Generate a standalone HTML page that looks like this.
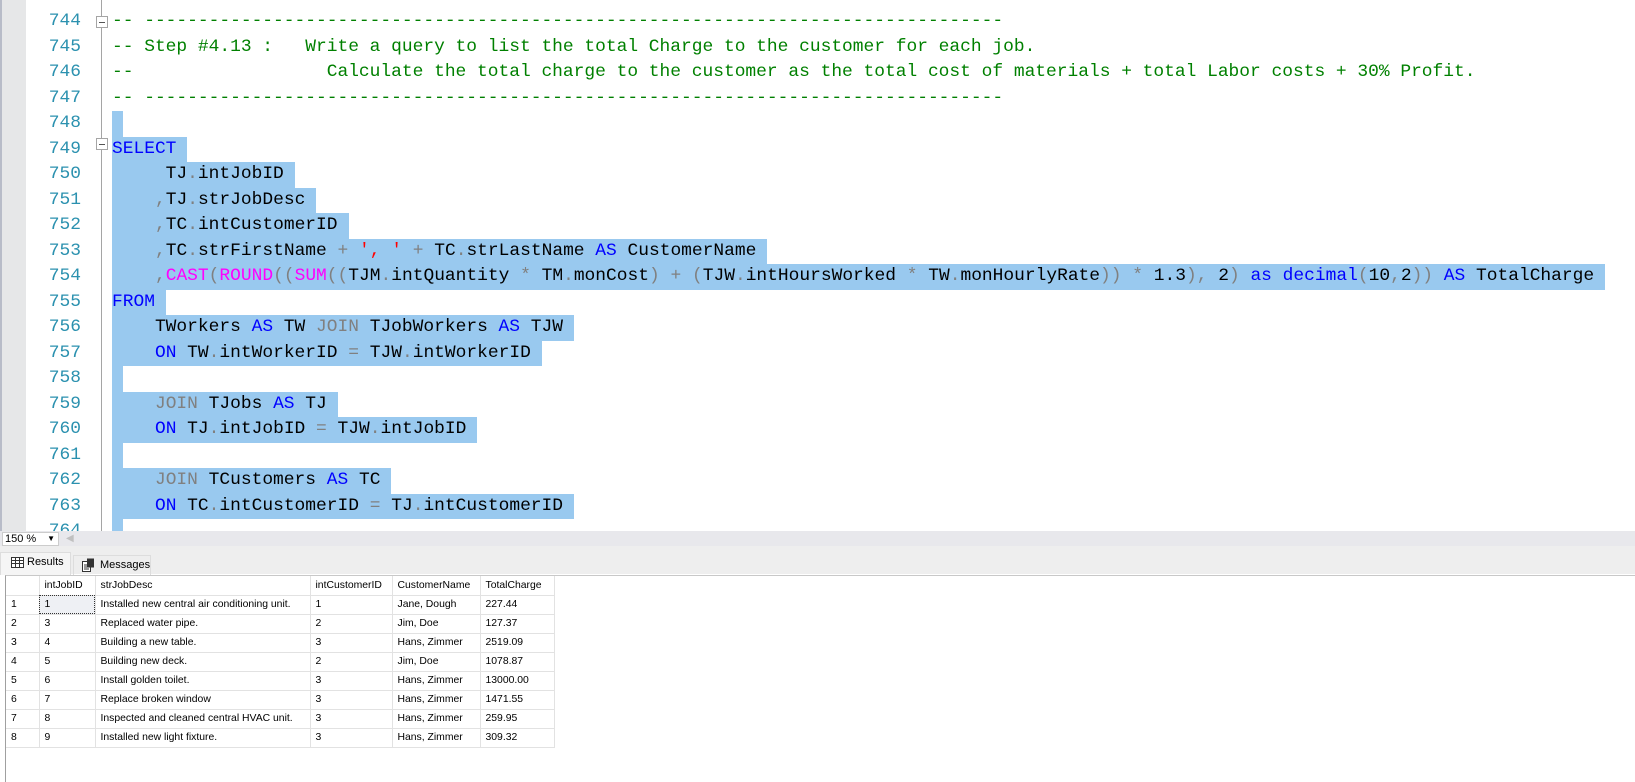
<!DOCTYPE html>
<html><head><meta charset="utf-8"><style>
*{margin:0;padding:0;box-sizing:border-box}
body{width:1635px;height:782px;overflow:hidden;background:#fff;position:relative;font-family:"Liberation Sans",sans-serif}
.gut{position:absolute;left:0;top:0;width:26px;height:531px;background:#e6e7e8;border-left:2px solid #b8bcc8}
.fold{position:absolute;left:101px;top:0;width:1px;height:531px;background:#a5a5a5}
.fb{position:absolute;left:96px;width:12px;height:12px;border:1px solid #a5a5a5;background:#fff}
.fb:after{content:"";position:absolute;left:2px;top:5px;width:6px;height:1px;background:#555}
.ed{position:absolute;left:0;top:2px;width:1635px;height:529px;overflow:hidden}
.ln{position:absolute;left:26px;width:55px;text-align:right;font-family:"Liberation Mono",monospace;font-size:17.9px;color:#2b91af;line-height:25.5px;height:25.5px}
.cl{position:absolute;left:112px;font-family:"Liberation Mono",monospace;font-size:17.9px;line-height:25.5px;height:25.5px;white-space:pre;color:#000}
.s{background:#99c9ef;padding-right:11px;display:inline-block;height:25.5px}
.c{color:#008000}.k{color:#0000ff}.g{color:#808080}.f{color:#ff00ff}.r{color:#ff0000}
.bar{position:absolute;left:0;top:531px;width:1635px;height:15px;background:#e8e8ec}
.zoom{position:absolute;left:2px;top:532px;width:57px;height:14px;background:#fff;border:1px solid #ccc;font-size:11px;line-height:12px;padding-left:2px}
.tabs{position:absolute;left:0;top:546px;width:1635px;height:28px;background:#eeeeee}
.tab{position:absolute;font-size:11px;line-height:18px;padding-left:26px}
.grid{position:absolute;left:5px;top:575px;right:0;bottom:0;background:#fff;border-left:1px solid #a0a0a0;border-top:1px solid #c8c8c8}
table{border-collapse:collapse;font-size:10.4px;position:absolute;left:0;top:0}
td{height:19px;border-right:1px solid #e2e2e2;border-bottom:1px solid #e2e2e2;padding:0 0 0 5px;white-space:nowrap;color:#000}
</style></head><body>
<div class="gut"></div>
<div class="fold"></div>
<div class="ed">
<div class="fb" style="top:14px"></div>
<div class="fb" style="top:136px"></div>

<div class="ln" style="top:-18.5px">743</div>
<div class="ln" style="top:7px">744</div><div class="cl c" style="top:7px">-- --------------------------------------------------------------------------------</div>
<div class="ln" style="top:32.5px">745</div><div class="cl c" style="top:32.5px">-- Step #4.13 :   Write a query to list the total Charge to the customer for each job.</div>
<div class="ln" style="top:58px">746</div><div class="cl c" style="top:58px">--                  Calculate the total charge to the customer as the total cost of materials + total Labor costs + 30% Profit.</div>
<div class="ln" style="top:83.5px">747</div><div class="cl c" style="top:83.5px">-- --------------------------------------------------------------------------------</div>
<div class="ln" style="top:109px">748</div><div class="cl" style="top:109px"><span class="s"></span></div>
<div class="ln" style="top:134.5px">749</div><div class="cl" style="top:134.5px"><span class="s"><span class="k">SELECT</span></span></div>
<div class="ln" style="top:160px">750</div><div class="cl" style="top:160px"><span class="s">     TJ<span class="g">.</span>intJobID</span></div>
<div class="ln" style="top:185.5px">751</div><div class="cl" style="top:185.5px"><span class="s">    <span class="g">,</span>TJ<span class="g">.</span>strJobDesc</span></div>
<div class="ln" style="top:211px">752</div><div class="cl" style="top:211px"><span class="s">    <span class="g">,</span>TC<span class="g">.</span>intCustomerID</span></div>
<div class="ln" style="top:236.5px">753</div><div class="cl" style="top:236.5px"><span class="s">    <span class="g">,</span>TC<span class="g">.</span>strFirstName <span class="g">+</span> <span class="r">', '</span> <span class="g">+</span> TC<span class="g">.</span>strLastName <span class="k">AS</span> CustomerName</span></div>
<div class="ln" style="top:262px">754</div><div class="cl" style="top:262px"><span class="s">    <span class="g">,</span><span class="f">CAST</span><span class="g">(</span><span class="f">ROUND</span><span class="g">((</span><span class="f">SUM</span><span class="g">((</span>TJM<span class="g">.</span>intQuantity <span class="g">*</span> TM<span class="g">.</span>monCost<span class="g">)</span> <span class="g">+</span> <span class="g">(</span>TJW<span class="g">.</span>intHoursWorked <span class="g">*</span> TW<span class="g">.</span>monHourlyRate<span class="g">))</span> <span class="g">*</span> 1.3<span class="g">),</span> 2<span class="g">)</span> <span class="k">as</span> <span class="k">decimal</span><span class="g">(</span>10<span class="g">,</span>2<span class="g">))</span> <span class="k">AS</span> TotalCharge</span></div>
<div class="ln" style="top:287.5px">755</div><div class="cl" style="top:287.5px"><span class="s"><span class="k">FROM</span></span></div>
<div class="ln" style="top:313px">756</div><div class="cl" style="top:313px"><span class="s">    TWorkers <span class="k">AS</span> TW <span class="g">JOIN</span> TJobWorkers <span class="k">AS</span> TJW</span></div>
<div class="ln" style="top:338.5px">757</div><div class="cl" style="top:338.5px"><span class="s">    <span class="k">ON</span> TW<span class="g">.</span>intWorkerID <span class="g">=</span> TJW<span class="g">.</span>intWorkerID</span></div>
<div class="ln" style="top:364px">758</div><div class="cl" style="top:364px"><span class="s"></span></div>
<div class="ln" style="top:389.5px">759</div><div class="cl" style="top:389.5px"><span class="s">    <span class="g">JOIN</span> TJobs <span class="k">AS</span> TJ</span></div>
<div class="ln" style="top:415px">760</div><div class="cl" style="top:415px"><span class="s">    <span class="k">ON</span> TJ<span class="g">.</span>intJobID <span class="g">=</span> TJW<span class="g">.</span>intJobID</span></div>
<div class="ln" style="top:440.5px">761</div><div class="cl" style="top:440.5px"><span class="s"></span></div>
<div class="ln" style="top:466px">762</div><div class="cl" style="top:466px"><span class="s">    <span class="g">JOIN</span> TCustomers <span class="k">AS</span> TC</span></div>
<div class="ln" style="top:491.5px">763</div><div class="cl" style="top:491.5px"><span class="s">    <span class="k">ON</span> TC<span class="g">.</span>intCustomerID <span class="g">=</span> TJ<span class="g">.</span>intCustomerID</span></div>
<div class="ln" style="top:517px">764</div><div class="cl" style="top:517px"><span class="s"></span></div>
</div>

<div class="bar"></div>
<div class="zoom">150 %<span style="position:absolute;right:3px;top:0;font-size:8px">&#9660;</span></div>
<div style="position:absolute;left:66px;top:533px;font-size:10px;color:#c0c0c0">&#9664;</div>
<div class="tabs"></div>
<div class="tab" style="left:0;top:552px;width:71px;height:23px;background:#f5f5f5;border:1px solid #ddd;border-bottom:none">
<svg style="position:absolute;left:10px;top:4px" width="13" height="11" viewBox="0 0 13 11"><rect x="0.5" y="0.5" width="12" height="10" fill="#fff" stroke="#333"/><path d="M0 3.5H13M0 6.5H13M4.5 0V11M8.5 0V11" stroke="#333"/></svg>Results</div>
<div class="tab" style="left:73px;top:555px;width:78px;height:20px;border:1px solid #ddd;border-bottom:none">
<svg style="position:absolute;left:8px;top:2px" width="13" height="14" viewBox="0 0 13 14"><rect x="0.5" y="3.5" width="8" height="10" fill="#fff" stroke="#333"/><rect x="5" y="0.5" width="7" height="9" fill="#333"/><path d="M2 7H7M2 9H7M2 11H7" stroke="#333"/></svg>Messages</div>
<div class="grid"><table>
<tr><td style="width:33px"></td><td style="width:56px">intJobID</td><td style="width:215px">strJobDesc</td><td style="width:82px">intCustomerID</td><td style="width:88px">CustomerName</td><td style="width:74px">TotalCharge</td></tr>
<tr><td>1</td><td style="background:#eef0f4;outline:1px dotted #333;outline-offset:-1px">1</td><td>Installed new central air conditioning unit.</td><td>1</td><td>Jane, Dough</td><td>227.44</td></tr>
<tr><td>2</td><td>3</td><td>Replaced water pipe.</td><td>2</td><td>Jim, Doe</td><td>127.37</td></tr>
<tr><td>3</td><td>4</td><td>Building a new table.</td><td>3</td><td>Hans, Zimmer</td><td>2519.09</td></tr>
<tr><td>4</td><td>5</td><td>Building new deck.</td><td>2</td><td>Jim, Doe</td><td>1078.87</td></tr>
<tr><td>5</td><td>6</td><td>Install golden toilet.</td><td>3</td><td>Hans, Zimmer</td><td>13000.00</td></tr>
<tr><td>6</td><td>7</td><td>Replace broken window</td><td>3</td><td>Hans, Zimmer</td><td>1471.55</td></tr>
<tr><td>7</td><td>8</td><td>Inspected and cleaned central HVAC unit.</td><td>3</td><td>Hans, Zimmer</td><td>259.95</td></tr>
<tr><td>8</td><td>9</td><td>Installed new light fixture.</td><td>3</td><td>Hans, Zimmer</td><td>309.32</td></tr>
</table></div>
</body></html>
